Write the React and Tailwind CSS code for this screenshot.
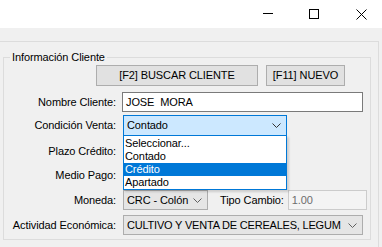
import React from "react";

const font = { fontFamily: '"Liberation Sans", Arial, sans-serif' };

function Chevron({ color = "#606060" }) {
  return (
    <svg width="9" height="5" viewBox="0 0 9 5" className="shrink-0">
      <path d="M0.5 0.5 L4.5 4.5 L8.5 0.5" fill="none" stroke={color} strokeWidth="1" />
    </svg>
  );
}

function Label({ children }) {
  return <div className="w-[112px] shrink-0 text-right whitespace-nowrap">{children}</div>;
}

const options = ["Seleccionar...", "Contado", "Crédito", "Apartado"];

export default function App() {
  return (
    <div
      className="w-[382px] h-[247px] bg-[#f0f0f0] overflow-hidden text-[11px] leading-[13px] text-black tracking-[-0.1px]"
      style={font}
    >
      {/* title bar */}
      <div className="h-[28px] bg-white flex items-center">
        <svg width="10" height="1" className="ml-[263px] mt-[-2px]">
          <rect width="10" height="1" fill="#000" />
        </svg>
        <svg width="10" height="10" className="ml-[36px]">
          <rect x="0.5" y="0.5" width="9" height="9" fill="none" stroke="#000" />
        </svg>
        <svg width="11" height="11" className="ml-[37px]">
          <path d="M0.5 0.5 L10.5 10.5 M10.5 0.5 L0.5 10.5" stroke="#000" strokeWidth="1" />
        </svg>
      </div>

      {/* outer panel */}
      <div className="mt-[13px] w-[379px] h-[220px] border-t border-r border-[#dcdcdc] pt-[15px]">
        {/* group box */}
        <div className="relative ml-[3px] w-[368px] h-[183px] border border-[#dcdcdc] pt-[7px]">
          <div className="absolute -top-[8px] left-[6px] px-[2px] bg-[#f0f0f0] leading-[14px]">
            Información Cliente
          </div>

          {/* buttons */}
          <div className="flex h-[21px] pl-[92px]">
            <div className="w-[162px] h-[21px] bg-[#e1e1e1] border border-[#adadad] flex items-center justify-center">
              [F2] BUSCAR CLIENTE
            </div>
            <div className="ml-[8px] w-[79px] h-[21px] bg-[#e1e1e1] border border-[#adadad] flex items-center justify-center">
              [F11] NUEVO
            </div>
          </div>

          {/* nombre */}
          <div className="flex items-center mt-[6px] h-[20px]">
            <Label>Nombre Cliente:</Label>
            <div className="ml-[6px] w-[241px] h-[20px] bg-white border border-[#7a7a7a] flex items-center pl-[3px] whitespace-pre">
              JOSE  MORA
            </div>
          </div>

          {/* condicion venta */}
          <div className="flex items-center mt-[3px] h-[21px]">
            <Label>Condición Venta:</Label>
            <div className="relative ml-[7px] w-[164px] h-[21px]">
              <div className="w-full h-full bg-[#cce8ff] border border-[#0078d7] flex items-center justify-between pl-[3px] pr-[5px]">
                <span>Contado</span>
                <Chevron color="#333" />
              </div>
              <div className="absolute left-0 top-[20px] w-[164px] h-[55px] bg-white border border-[#0078d7] shadow-[2px_2px_2px_rgba(0,0,0,0.15)] z-10 pt-[1px]">
                {options.map((o) => (
                  <div
                    key={o}
                    className={`h-[13px] leading-[13px] pl-[1px] ${o === "Crédito" ? "bg-[#0078d7] text-white" : ""}`}
                  >
                    {o}
                  </div>
                ))}
              </div>
            </div>
          </div>

          {/* plazo credito */}
          <div className="flex items-center mt-[5px] h-[21px]">
            <Label>Plazo Crédito:</Label>
          </div>

          {/* medio pago */}
          <div className="flex items-center mt-[3px] h-[21px]">
            <Label>Medio Pago:</Label>
          </div>

          {/* moneda / tipo cambio */}
          <div className="flex items-center mt-[4px] h-[20px]">
            <Label>Moneda:</Label>
            <div className="ml-[7px] w-[85px] h-[20px] bg-[#e5e5e5] border border-[#adadad] flex items-center justify-between pl-[3px] pr-[5px]">
              <span>CRC - Colón</span>
              <Chevron />
            </div>
            <div className="ml-[12px] whitespace-nowrap">Tipo Cambio:</div>
            <div className="ml-[4px] w-[79px] h-[20px] bg-[#f4f4f4] border border-[#cccccc] flex items-center pl-[3px] text-[#6d6d6d]">
              1.00
            </div>
          </div>

          {/* actividad economica */}
          <div className="flex items-center mt-[5px] h-[20px]">
            <Label>Actividad Económica:</Label>
            <div className="ml-[7px] w-[240px] h-[20px] bg-[#e5e5e5] border border-[#adadad] flex items-center pl-[3px] pr-[5px]">
              <span className="whitespace-nowrap tracking-[-0.2px]">
                CULTIVO Y VENTA DE CEREALES, LEGUM
              </span>
              <span className="ml-auto">
                <Chevron />
              </span>
            </div>
          </div>
        </div>
      </div>
    </div>
  );
}
